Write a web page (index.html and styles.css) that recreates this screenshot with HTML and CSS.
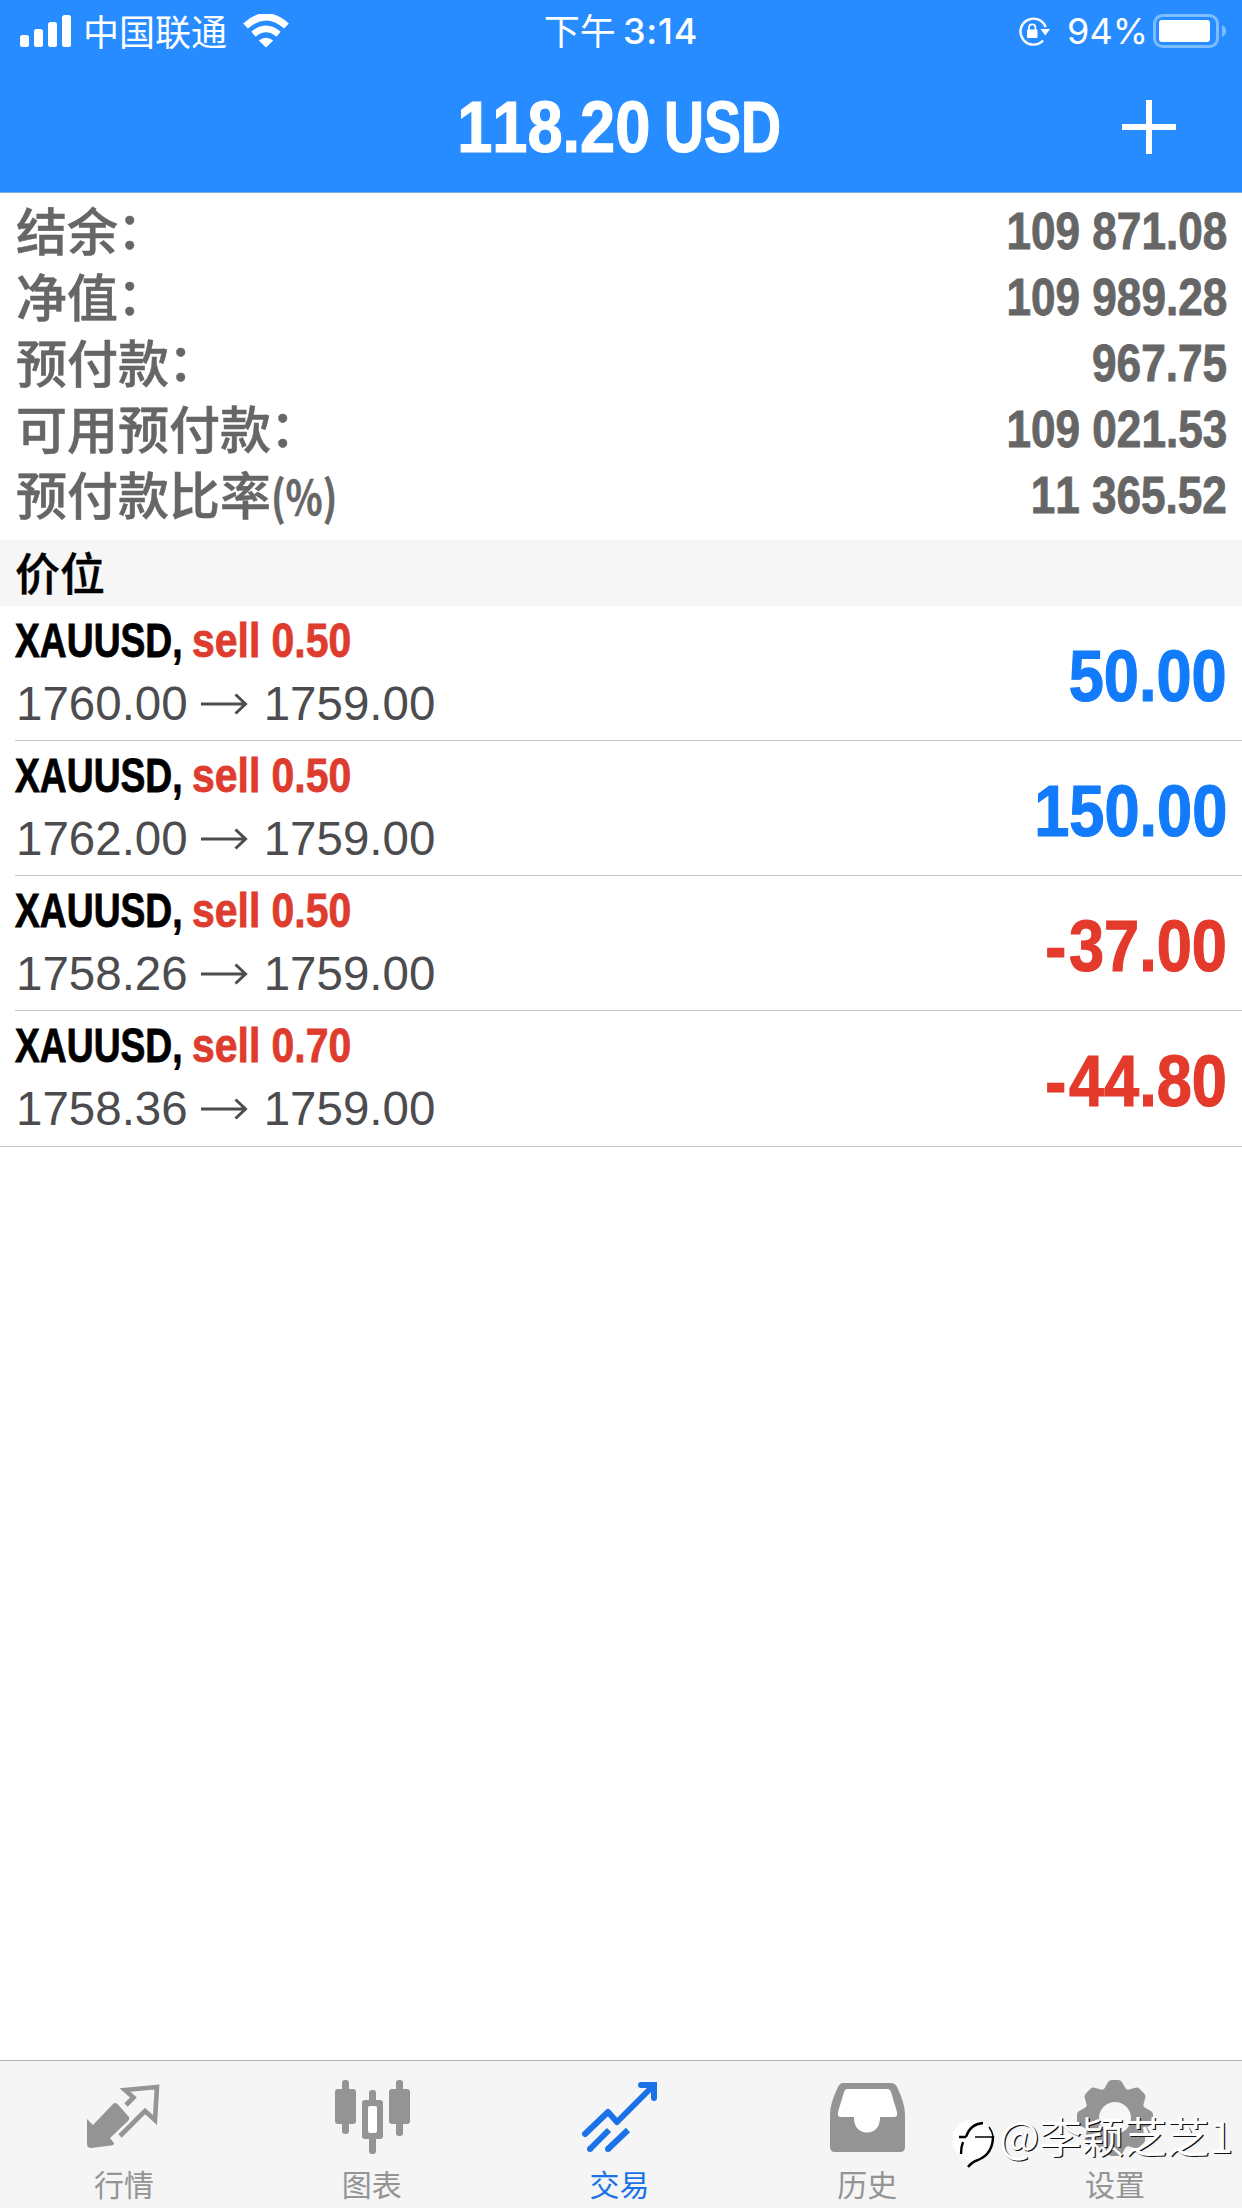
FILE: index.html
```html
<!DOCTYPE html>
<html lang="zh-CN">
<head>
<meta charset="utf-8">
<title>交易</title>
<link rel="stylesheet" href="styles.css">
</head>
<body>
<div class="app">
  <header class="top">
    <div class="status">
      <div class="status-left">
        <svg class="signal" width="52" height="32" viewBox="0 0 52 32" fill="#fff"><rect x="0" y="20" width="9" height="12" rx="2.5"/><rect x="14" y="14" width="9" height="18" rx="2.5"/><rect x="28" y="7" width="9" height="25" rx="2.5"/><rect x="42" y="0" width="9" height="32" rx="2.5"/></svg>
        <span class="carrier">中国联通</span>
        <svg class="wifi" width="46" height="34" viewBox="0 0 46 34"><path d="M2.500 12Q23-6.500 43.500 12" stroke="#fff" stroke-width="7" fill="none"/><path d="M10.500 20.200Q23 9.500 35.500 20.200" stroke="#fff" stroke-width="6.600" fill="none"/><path d="M23 33.500L15.800 26.600Q23 21 30.200 26.600Z" fill="#fff"/></svg>
      </div>
      <div class="clock"><span class="ampm">下午</span><span class="time">3:14</span></div>
      <div class="status-right">
        <svg class="lock" width="32" height="30" viewBox="0 0 32 30"><path d="M27.600 10A13 13 0 1 0 25 23.500" fill="none" stroke="#fff" stroke-width="2.400"/><path d="M22.500 12H32L27.300 18.500Z" fill="#fff"/><rect x="9" y="12.500" width="10.500" height="8.500" rx="1" fill="#fff"/><path d="M11 13V10.500a3.200 3.200 0 0 1 6.400 0V13" fill="none" stroke="#fff" stroke-width="1.700"/></svg>
        <span class="percent">94%</span>
        <svg class="battery" width="74" height="34" viewBox="0 0 74 34"><rect x="1.500" y="1.500" width="63" height="31" rx="8" fill="none" stroke="#7dbcff" stroke-width="3"/><rect x="6" y="6" width="51" height="22" rx="3" fill="#fff"/><path d="M69 11q4 2 4 6t-4 6Z" fill="#7dbcff"/></svg>
      </div>
    </div>
    <div class="nav">
      <h1 class="total cond"><span class="num">118.20</span><span class="caps">USD</span></h1>
      <svg class="plus" width="54" height="54" viewBox="0 0 54 54"><path d="M27 0V54M0 27H54" stroke="#fff" stroke-width="6"/></svg>
    </div>
  </header>

  <dl class="summary">
    <div class="line"><dt>结余<span class="colon">：</span></dt><dd class="cond num">109 871.08</dd></div>
    <div class="line"><dt>净值<span class="colon">：</span></dt><dd class="cond num">109 989.28</dd></div>
    <div class="line"><dt>预付款<span class="colon">：</span></dt><dd class="cond num">967.75</dd></div>
    <div class="line"><dt>可用预付款<span class="colon">：</span></dt><dd class="cond num">109 021.53</dd></div>
    <div class="line"><dt>预付款比率<span class="unit">(%)</span></dt><dd class="cond num">11 365.52</dd></div>
  </dl>

  <h2 class="section">价位</h2>
  <ul class="positions">
    <li class="position">
      <div class="info">
        <div class="deal cond"><span class="symbol">XAUUSD,</span><span class="side">sell 0.50</span></div>
        <div class="prices"><span>1760.00</span><svg class="arrow" width="47" height="22" viewBox="0 0 47 22"><path d="M0 11H44M34.500 1.500L44.500 11L34.500 20.500"/></svg><span>1759.00</span></div>
      </div>
      <div class="profit cond num gain">50.00</div>
    </li>
    <li class="position">
      <div class="info">
        <div class="deal cond"><span class="symbol">XAUUSD,</span><span class="side">sell 0.50</span></div>
        <div class="prices"><span>1762.00</span><svg class="arrow" width="47" height="22" viewBox="0 0 47 22"><path d="M0 11H44M34.500 1.500L44.500 11L34.500 20.500"/></svg><span>1759.00</span></div>
      </div>
      <div class="profit cond num gain">150.00</div>
    </li>
    <li class="position">
      <div class="info">
        <div class="deal cond"><span class="symbol">XAUUSD,</span><span class="side">sell 0.50</span></div>
        <div class="prices"><span>1758.26</span><svg class="arrow" width="47" height="22" viewBox="0 0 47 22"><path d="M0 11H44M34.500 1.500L44.500 11L34.500 20.500"/></svg><span>1759.00</span></div>
      </div>
      <div class="profit cond num loss"><span class="minus">-</span>37.00</div>
    </li>
    <li class="position">
      <div class="info">
        <div class="deal cond"><span class="symbol">XAUUSD,</span><span class="side">sell 0.70</span></div>
        <div class="prices"><span>1758.36</span><svg class="arrow" width="47" height="22" viewBox="0 0 47 22"><path d="M0 11H44M34.500 1.500L44.500 11L34.500 20.500"/></svg><span>1759.00</span></div>
      </div>
      <div class="profit cond num loss"><span class="minus">-</span>44.80</div>
    </li>
  </ul>

  <nav class="tabs">
    <a class="tab">
      <svg width="80" height="80" viewBox="0 0 80 80"><path d="M3 39L9 45L29 24Q31 22 33.500 24L45 37Q46 39 44 41L26 58L30 63Q30 65 27 65.500L7 68Q3 68 3 64Z" fill="#949494"/><path d="M42 25L49.500 17.500L41 10L73 7L71 40L61 31L36 56" fill="none" stroke="#949494" stroke-width="4.600"/></svg>
      <span>行情</span>
    </a>
    <a class="tab">
      <svg width="80" height="80" viewBox="0 0 80 80" fill="#949494"><rect x="10" y="0" width="7" height="54" rx="3"/><rect x="3" y="9" width="21" height="35" rx="3"/><rect x="64" y="0" width="7" height="56" rx="3"/><rect x="57" y="9" width="21" height="35" rx="3"/><rect x="37" y="10" width="7" height="64" rx="3"/><rect x="30" y="20" width="21" height="39" rx="3"/><rect x="36" y="26" width="9" height="27" rx="2" fill="#fff"/></svg>
      <span>图表</span>
    </a>
    <a class="tab active">
      <svg width="80" height="80" viewBox="0 0 80 80" fill="none" stroke="#1b72e8" stroke-width="6"><path d="M6 54L29 32L38 42L74 6" stroke-linejoin="round" stroke-linecap="round"/><path d="M62 5H75V18" stroke-linecap="round"/><path d="M11 69L30 50M29 69L49 50"/><circle cx="11" cy="69" r="3" fill="#1b72e8" stroke="none"/><circle cx="29" cy="69" r="3" fill="#1b72e8" stroke="none"/></svg>
      <span>交易</span>
    </a>
    <a class="tab">
      <svg width="80" height="80" viewBox="0 0 80 80"><path d="M16 3H64Q68 3 70 7Q78 23 78 35V67Q78 72 73 72H8Q3 72 3 67V35Q3 23 11 7Q13 3 16 3Z" fill="#949494"/><path d="M20 9H60Q63 9 64 12L70 32Q71 37 67 37H53Q53 52 40 52.500Q27 52 27 37H14Q10 37 11 32L17 12Q18 9 20 9Z" fill="#fff"/></svg>
      <span>历史</span>
    </a>
    <a class="tab">
      <svg width="80" height="80" viewBox="0 0 80 80"><g fill="#949494"><circle cx="40" cy="38" r="31"/><g id="teeth"><path id="tooth" d="M28 11L32.500 3Q34 0 37 0H43Q46 0 47.500 3L52 11Z"/><use href="#tooth" transform="rotate(45 40 38)"/><use href="#tooth" transform="rotate(90 40 38)"/><use href="#tooth" transform="rotate(135 40 38)"/></g><use href="#teeth" transform="rotate(180 40 38)"/></g><circle cx="40" cy="38" r="16" fill="#f7f7f7"/></svg>
      <span>设置</span>
    </a>
  </nav>

  <div class="watermark">
    <svg width="46" height="50" viewBox="0 0 46 50"><circle cx="21" cy="20" r="20.500" fill="#fff"/><path d="M14 17Q18 4 31 3M7 17H14M11 22Q9 27 9 34M41 16Q41 34 26 40Q20 42 16 47" fill="none" stroke="#000" stroke-width="2.400"/><path d="M23 17H41M37 7Q40 11 41 16" fill="none" stroke="#000" stroke-width="1.500"/></svg>
    <span>@李颖芝芝1</span>
  </div>
</div>
</body>
</html>
```
FILE: styles.css
```css
* { box-sizing: border-box; margin: 0; padding: 0; }
body { background: #fff; font-family: "Liberation Sans", "Noto Sans CJK SC", sans-serif; }
svg { display: block; flex: none; }
.app { position: relative; width: 1242px; height: 2208px; display: flex; flex-direction: column; background: #fff; overflow: hidden; }

/* Condensed bold: Liberation Sans Bold narrowed horizontally */
.cond { font-family: "Liberation Sans", sans-serif; font-weight: 700; font-kerning: none; white-space: nowrap; -webkit-text-stroke: .017em currentColor; }
.num { transform: scaleX(.865); transform-origin: right center; }

.top { height: 193px; background: #268cff; border-bottom: 1px solid #7eacdf; color: #fff; }
.status { height: 60px; display: grid; grid-template-columns: 1fr auto 1fr; font-family: Inter, "Noto Sans CJK SC", sans-serif; font-size: 36px; line-height: 62px; }
.status-left { display: flex; align-items: center; padding-left: 20px; }
.carrier { margin: -2px 0 0 11px; font-family: "Noto Sans CJK SC", sans-serif; font-weight: 400; line-height: 58px; }
.wifi { margin-left: 16px; }
.clock { display: flex; gap: 7px; font-weight: 500; }
.time { letter-spacing: .8px; }
.ampm { font-family: "Noto Sans CJK SC", sans-serif; font-weight: 400; line-height: 58px; }
.status-right { display: flex; align-items: center; justify-content: flex-end; padding-right: 15px; }
.percent { margin: 0 5px 0 17px; }
.lock { margin-top: 2px; }
.nav { height: 132px; display: grid; grid-template-columns: 1fr auto 1fr; align-items: center; }
.total { grid-column: 2; display: flex; gap: 14px; padding-left: 3px; font-size: 73px; line-height: 133px; }
.caps { transform: scaleX(.76); transform-origin: left center; }
.plus { justify-self: end; margin-right: 66px; }

.summary { height: 347px; padding: 6px 15px 0 16px; color: #666; }
.line { display: flex; justify-content: space-between; height: 66px; line-height: 66px; }
.line dt { font: 500 51px/60px "Noto Sans CJK SC", sans-serif; -webkit-text-stroke: .5px currentColor; }
.line dd { font-size: 51px; }
.colon { display: inline-block; transform: translate(-1px, -2px); }
.unit { display: inline-block; font-size: 47px; font-weight: 700; transform: scaleX(.82); transform-origin: left center; }

.section { height: 66px; padding-left: 15px; background: #f6f6f6; font: 500 45px/64px "Noto Sans CJK SC", sans-serif; -webkit-text-stroke: .4px currentColor; }
.positions { list-style: none; border-bottom: 1px solid #c4c4c4; }
.position { height: 135px; margin-left: 15px; padding-right: 15px; display: flex; justify-content: space-between; border-bottom: 1px solid #c4c4c4; }
.position:last-child { border-bottom: 0; }
.deal { display: flex; height: 70px; font-size: 49px; line-height: 69px; }
.symbol { margin-right: -44px; transform: scaleX(.76); transform-origin: left center; }
.side { color: #de3c2e; transform: scaleX(.835); transform-origin: left center; }
.prices { display: flex; align-items: center; height: 56px; padding-left: 1px; font-size: 47.5px; line-height: 56px; color: #4c4c4e; }
.arrow { margin: 0 16px 0 13px; fill: none; stroke: #4c4c4e; stroke-width: 3; }
.profit { font-size: 73px; line-height: 139px; }
.minus { margin-right: 3px; }
.gain { color: #127bfb; }
.loss { color: #e33a2c; }

.tabs { margin-top: auto; height: 148px; padding-right: 3px; display: flex; border-top: 1px solid #b2b2b2; background: #f5f5f5; }
.tab { flex: 1; display: flex; flex-direction: column; align-items: center; padding-top: 19px; color: #949494; font: 400 30px/44px "Noto Sans CJK SC", sans-serif; }
.tab span { margin-top: 1px; }
.tab.active { color: #1b72e8; }

.watermark { position: absolute; left: 952px; top: 2120px; display: flex; align-items: flex-start; color: #fff; }
.watermark span { margin: -13px 0 0 1px; font: 400 42.5px/56px "Noto Sans CJK SC", sans-serif; text-shadow: 1.2px 1.2px 0 #111; white-space: nowrap; }
```
